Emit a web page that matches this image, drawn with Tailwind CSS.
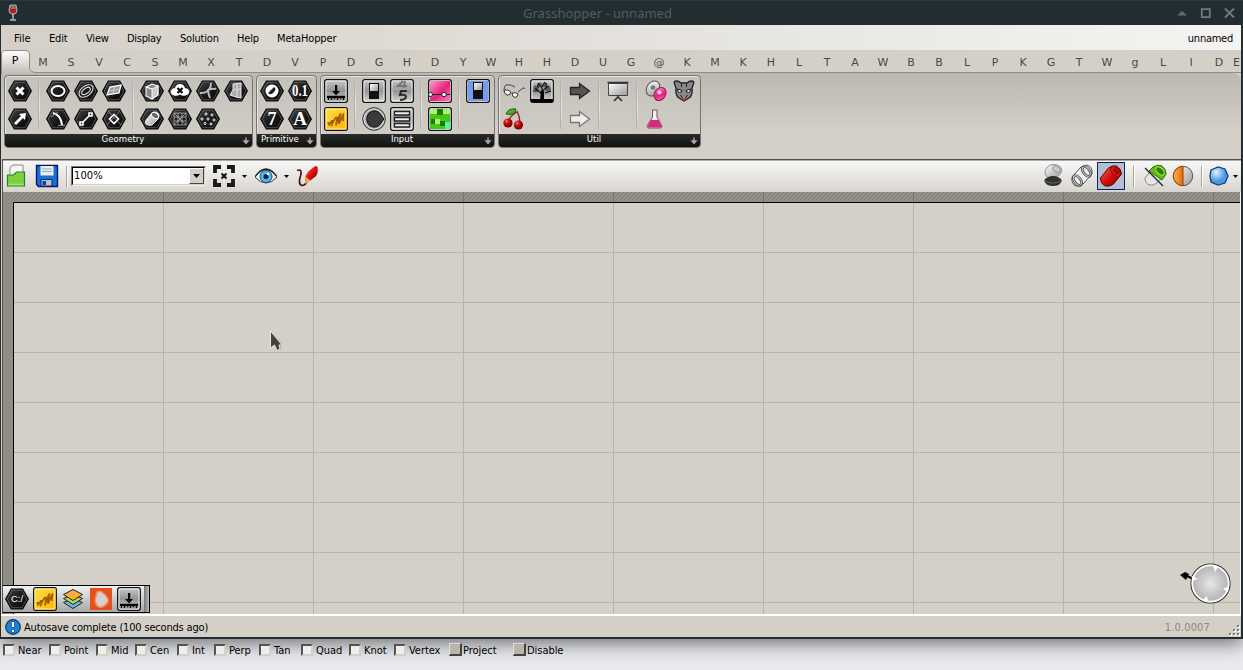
<!DOCTYPE html>
<html lang="en"><head><meta charset="utf-8"><title>Grasshopper - unnamed</title>
<script src="https://cdn.jsdelivr.net/npm/@tailwindcss/browser@4"></script></head>
<body class="w-[1243px] h-[670px] overflow-hidden bg-[#e9eaee] text-black text-[11px] leading-[14px] [font-family:'DejaVu_Sans_Condensed','DejaVu_Sans',sans-serif] [font-stretch:condensed]">
<svg class="absolute w-0 h-0">
<defs>
<linearGradient id="gHex" x1="0" y1="0" x2="1" y2="1"><stop offset="0" stop-color="#4a4a4a"/><stop offset=".45" stop-color="#1d1d1d"/><stop offset="1" stop-color="#050505"/></linearGradient>
<linearGradient id="gGrey" x1="0" y1="0" x2="0" y2="1"><stop offset="0" stop-color="#c8c8c8"/><stop offset=".5" stop-color="#939393"/><stop offset="1" stop-color="#d8d8d8"/></linearGradient>
<linearGradient id="gMetal" x1="0" y1="0" x2="1" y2="1"><stop offset="0" stop-color="#fff"/><stop offset="1" stop-color="#999"/></linearGradient>
<linearGradient id="gRed" x1="0" y1="0" x2="1" y2="1"><stop offset="0" stop-color="#ff6a5a"/><stop offset=".5" stop-color="#d80f0f"/><stop offset="1" stop-color="#600"/></linearGradient>
<linearGradient id="gPink" x1="0" y1="0" x2="1" y2="1"><stop offset="0" stop-color="#ff9bcc"/><stop offset=".55" stop-color="#e8207c"/><stop offset="1" stop-color="#ff7cba"/></linearGradient>
<linearGradient id="gYel" x1="0" y1="0" x2="1" y2="1"><stop offset="0" stop-color="#ffe04a"/><stop offset="1" stop-color="#ffb400"/></linearGradient>
<linearGradient id="gOrange"><stop offset="0" stop-color="#ffb050"/><stop offset="1" stop-color="#df6a05"/></linearGradient>
<radialGradient id="gBall"><stop offset="0" stop-color="#e6e6e6"/><stop offset="1" stop-color="#b0b0b0"/></radialGradient>
<radialGradient id="gCherry" cx=".35" cy=".3"><stop offset="0" stop-color="#ff8a7a"/><stop offset=".4" stop-color="#e01515"/><stop offset="1" stop-color="#8a0000"/></radialGradient>
<radialGradient id="gBlue" cx=".35" cy=".3"><stop offset="0" stop-color="#dff4ff"/><stop offset="1" stop-color="#4a98e0"/></radialGradient>
</defs>
<symbol id="hex" viewBox="0 0 24 24"><path d="M6.3 2h11.4L23.3 12l-5.6 10H6.3L.7 12z" fill="url(#gHex)" stroke="#080808" stroke-width="1.2"/><path d="M6.9 3.3h10.2L21.8 12l-4.7 8.7H6.9L2.2 12z" fill="none" stroke="#777" stroke-width=".6"/></symbol>
<symbol id="sq" viewBox="0 0 24 24"><rect x=".7" y=".7" width="22.6" height="22.6" rx="2" fill="url(#gGrey)" stroke="#111" stroke-width="1.3"/><rect x="2" y="2" width="20" height="20" rx="1" fill="none" stroke="#f5f5f5" stroke-width=".9"/></symbol>
<symbol id="scrib" viewBox="0 0 24 24"><rect x=".7" y=".7" width="22.6" height="22.6" rx="2" fill="url(#gYel)" stroke="#111" stroke-width="1.3"/><rect x="2" y="2" width="20" height="20" fill="none" stroke="#fff3b0" stroke-width=".9"/><path d="M3.500 16.500q2-2 1.500 1.500 3-5 3.500-4t-1 4.500q3-7 4.500-8t0 7.500q2-8 4.500-11-2 6-1.500 9.500Q18 10 19.500 7q-1 6 0 7" fill="none" stroke="#a55a00" stroke-width="1.700" stroke-linejoin="round"/></symbol>
<symbol id="press" viewBox="0 0 24 24"><use href="#sq"/><path d="M2.500 16h19v5.500h-19z" fill="#888"/><path d="M11 6h2.200v6H16l-3.900 4.500L8 12h3zM3 17h18v2h-1v2h-1v-2h-2v1h-1v-1h-2v2h-1v-2h-2v1h-1v-1H8v2H7v-2H5v2H4v-2H3z" fill="#050505"/></symbol>
<symbol id="plus" viewBox="0 0 8 8"><path d="M3.300.5h1.400v2.800h2.800L4 7.500.5 3.300h2.800z" fill="#a8a8a8"/></symbol>
</svg>

<div class="h-[639px] w-[1243px] bg-[#222d32] flex flex-col relative z-10 shadow-[0_4px_18px_rgba(0,0,0,0.55)]">
 <header class="h-[25px] shrink-0 flex items-center relative px-[6px] border-t border-[#2b373c]">
  <svg width="14" height="18" viewBox="0 0 14 18"><path d="M4 1h6l1 5q0 4-3 4H6Q3 10 3 6z" fill="#776" stroke="#a9aaa9"/><path d="M4 5h6v2q0 2-3 2T4 7z" fill="#d30d0d"/><path d="M7 10v5M4 16h6" stroke="#b8bbb9" stroke-width="1.5"/></svg>
  <div class="flex-1 text-center text-[13px] tracking-[0.01px] text-[#525c62] [font-family:'Noto_Sans'] [font-stretch:normal]">Grasshopper - unnamed</div>
  <svg class="w-[65px] h-[14px] -mr-[3px]" viewBox="0 0 65 14"><path d="M2 9.500 7 5l5 4.500z" fill="#626971"/><path d="M26.800 3.200h8v8h-8z" fill="none" stroke="#737980" stroke-width="1.800"/><path d="m50 2.500 9 9m0-9-9 9" stroke="#737980" stroke-width="1.800"/></svg>
 </header>
 <div class="flex-1 min-h-0 ml-px mr-[2px] mb-[2px] bg-[#d4d0c8] flex flex-col">
  <nav class="h-[25px] shrink-0 flex items-center bg-gradient-to-r from-[#d4d0c8] to-[#f5f4f2] pl-[13px] pr-[8px] pt-[2px] whitespace-nowrap">
   <span class="w-[35px]">File</span><span class="w-[37px] tracking-[-0.2px]">Edit</span><span class="w-[41px] tracking-[-0.2px]">View</span><span class="w-[53px] tracking-[-0.3px]">Display</span><span class="w-[57px] tracking-[-0.2px]">Solution</span><span class="w-[40px] tracking-[-0.2px]">Help</span><span class="flex-1 tracking-[-0.15px]">MetaHopper</span><span class="tracking-[-0.25px]">unnamed</span>
  </nav>
  <div class="h-[23px] shrink-0 relative border-b border-[#918e88]">
   <svg class="absolute left-0 top-0 w-[36px] h-[24px]" viewBox="0 0 36 24"><defs><linearGradient id="gTab" x1="0" y1="0" x2="0" y2="1"><stop offset="0" stop-color="#fff"/><stop offset="1" stop-color="#bfbbb5"/></linearGradient></defs><path d="M.5 24V5Q.5.5 5 .5h19q4.500 0 4.500 4.500v12q0 5.500 7 5.500V24z" fill="url(#gTab)"/><path d="M.5 24V5Q.5.5 5 .5h19q4.500 0 4.500 4.500v12q0 5.500 7 5.500" fill="none" stroke="#918e88"/></svg>
   <div id="tabs" class="relative h-[22px] flex items-center text-[#494949] text-[11px] [font-family:'DejaVu_Sans'] [font-stretch:normal]"></div>
  </div>
  <section class="h-[86px] shrink-0 bg-gradient-to-b from-[#bcb8b2] to-[#d4d0c8] to-70% pt-[2px] pl-[3px] flex gap-[3px] items-start rounded-tr-lg" id="ribbon"></section>
  <div class="flex-1 min-h-0 ml-px flex flex-col border-t border-[#55524e] border-l">
   <div class="h-[32px] shrink-0 flex items-center bg-gradient-to-b from-[#f8f7f6] to-[#d8d5cf] border-t border-[#aaa] pb-px">
    <svg class="ml-[3px] w-[22px] h-6 shrink-0" viewBox="0 0 22 24"><path d="M4 9V3.500L7 1h10v11H4z" fill="#f6f6f6" stroke="#888"/><path d="M1.500 22V11h6l3-3h8v14z" fill="#7ed13d" stroke="#17882c" stroke-width="1.200"/><path d="M2.500 20.500h15" stroke="#a4e663" stroke-width="1.500"/></svg>
    <svg class="ml-[7px] w-6 h-6 shrink-0" viewBox="0 0 24 24"><path d="M1.500 1.500h21v21h-19l-2-2z" fill="#186fd6" stroke="#051a68" stroke-width="1.400"/><path d="M5.500 2h13v9.500h-13z" fill="#e9edf0"/><path d="M7 5h10M7 7.500h10" stroke="#9aa4ac"/><path d="M6 15.500h11V22H6z" fill="#b8c1cd" stroke="#092767"/><path d="M7.500 17H11v4H7.500z" fill="#0a3fae"/></svg>
    <i class="ml-[7px] w-[2px] h-[21px] border-l border-[#a5a39e] bg-white shrink-0"></i>
    <div class="ml-[3px] w-[135px] h-[20px] -mt-px border border-[#777] border-r-[#eee] border-b-[#eee] shrink-0"><div class="h-[18px] border border-black border-r-[#d4d0c8] border-b-[#d4d0c8] bg-white flex items-center pl-px"><span class="flex-1 tracking-[0.1px]">100%</span><div class="w-[15px] h-4 bg-[#d4d0c8] border border-white border-r-[#444] border-b-[#444] flex items-center justify-center"><svg width="7" height="4" viewBox="0 0 7 4"><path d="M0 0h7L3.500 4z"/></svg></div></div></div>
    <svg class="ml-[6px] w-6 h-6 shrink-0" viewBox="0 0 24 24"><path d="M3 9V3h6M15 3h6v6M21 15v6h-6M9 21H3v-6" fill="none" stroke="#1a1a18" stroke-width="3.800"/><path d="m9.500 9.500 5 5m0-5-5 5" stroke="#111" stroke-width="2"/></svg>
    <svg class="ml-[6px] w-[5px] h-[3px] shrink-0" viewBox="0 0 5 3"><path d="M0 0h5L2.500 3z"/></svg>
    <svg class="ml-[7px] w-6 h-6 shrink-0" viewBox="0 0 24 24"><path d="M1 13Q6 5.500 12 5.500T23 13q-5 6-11 6T1 13z" fill="#eef5f6" stroke="#333"/><circle cx="12" cy="12.500" r="6" fill="#4eb8ec" stroke="#164f76"/><circle cx="12" cy="12.500" r="2.500" fill="#031929"/><circle cx="14" cy="10" r="1.300" fill="#fff"/><path d="M1.500 12Q7 5 12 5t10.500 7" fill="none" stroke="#222" stroke-width="1.300"/></svg>
    <svg class="ml-[6px] w-[5px] h-[3px] shrink-0" viewBox="0 0 5 3"><path d="M0 0h5L2.500 3z"/></svg>
    <svg class="ml-[6px] w-6 h-6 shrink-0" viewBox="0 0 24 24"><path d="M2 6.500c4-1.500 5 .5 3.500 5.500-1.500 4-2 9 2 9.500 3-.5 4-3 4.500-5" fill="none" stroke="#501010" stroke-width="1.700"/><path d="M10.500 17v-5q3-6 10-10l2 .5q1 7-2 10l-6 4.500z" fill="url(#gRed)"/><path d="m10.500 12.500 5 4-5.500 3.500z" fill="#f1a23f"/></svg>
    <div class="flex-1"></div>
    <svg class="w-6 h-[26px] shrink-0" viewBox="0 0 24 26"><path d="M4 9q1-6 7-7.500 5-1 9 3 2 3-1 7l-4 3H7q-4-2-3-5.500z" fill="url(#gMetal)" stroke="#999"/><ellipse cx="15.500" cy="6" rx="4" ry="2.700" transform="rotate(35 15.500 6)" fill="#ccc" stroke="#999"/><path d="M3 17.500q3-4.500 9-4.500t9 4.500q-2 5.500-9 5.500-7 0-9-5.500z" fill="#30302f"/><path d="M3 17.500q9 5 18 0" stroke="#888" stroke-width=".6" fill="none"/></svg>
    <svg class="ml-[5px] w-6 h-6 shrink-0" viewBox="0 0 24 24" fill="none" stroke="#555"><path d="m2 13 9-10 6-2q6 2 5 9l-9 10q-3 3-7 2Q1 20 2 13z" fill="#eee"/><ellipse cx="7.500" cy="16.500" rx="4" ry="6.500" transform="rotate(-38 7.500 16.500)"/><ellipse cx="7.500" cy="16.500" rx="2.300" ry="4.500" transform="rotate(-38 7.500 16.500)"/><ellipse cx="16.500" cy="7.500" rx="4" ry="6.500" transform="rotate(-38 16.500 7.500)"/><ellipse cx="16.500" cy="7.500" rx="2.300" ry="4.500" transform="rotate(-38 16.500 7.500)"/></svg>
    <div class="ml-[3px] w-[28px] h-[28px] bg-[#b5bdd2] border border-[#0a246a] flex items-center justify-center shrink-0"><svg width="24" height="24" viewBox="0 0 24 24"><path d="m1.500 14 8-10q4-3 8-2 5 3 5 8l-8 10q-4 3-8 2-5-2-5-8z" fill="url(#gRed)" stroke="#600"/><ellipse cx="16.500" cy="7.500" rx="3.600" ry="6" transform="rotate(-45 16.500 7.500)" fill="#e52018" stroke="#8b0704"/><ellipse cx="17" cy="7.500" rx="2" ry="4" transform="rotate(-45 17 7.500)" fill="#970b0b"/></svg></div>
    <i class="ml-[8px] w-[2px] h-[21px] border-l border-[#a5a39e] bg-white shrink-0"></i>
    <svg class="ml-[8px] w-6 h-6 shrink-0" viewBox="0 0 24 24"><path d="m2 14 7-9q4-4 8-3 5 2 5 8l-8 9q-4 3-7 2-5-1-5-7z" fill="#e5e5e5" stroke="#888"/><path d="m6 7 4-4q5-3 9-1 4 3 4 8l-4 6z" fill="#63bc13" stroke="#267103"/><ellipse cx="17" cy="7" rx="3" ry="5" transform="rotate(-45 17 7)" fill="#307e08" stroke="#a4ef47"/><path d="m2 4 18 18" stroke="#222" stroke-width="1.200"/></svg>
    <svg class="ml-[4px] w-6 h-6 shrink-0" viewBox="0 0 24 24"><circle cx="12" cy="12" r="9.700" fill="url(#gMetal)" stroke="#555"/><path d="M12 2.300a9.700 9.700 0 0 0 0 19.400z" fill="url(#gOrange)" stroke="#954109"/></svg>
    <i class="ml-[6px] w-[2px] h-[21px] border-l border-[#a5a39e] bg-white shrink-0"></i>
    <svg class="ml-[4px] w-6 h-6 shrink-0" viewBox="0 0 24 24"><path d="m4 6 7-3 7 2 3 7-3 7-7 2-7-3-1-6z" fill="url(#gBlue)" stroke="#173d7d" stroke-width="1.300"/></svg>
    <svg class="ml-[2px] mr-[3px] w-[5px] h-[3px] shrink-0" viewBox="0 0 5 3"><path d="M0 0h5L2.500 3z"/></svg>
   </div>
   <main class="flex-1 min-h-0 relative overflow-hidden">
    <svg class="block w-[1238px] h-[422px]" viewBox="3 192 1238 422"><defs><pattern id="hatch" width="4" height="4" patternUnits="userSpaceOnUse"><path d="M0 0h4v4H0z" fill="#96948d"/><path d="m-1 5 6-6M-1 1l2-2M3 5l2-2" stroke="#84827b" stroke-width="1.200"/></pattern><pattern id="grid" x="13" y="202" width="150" height="50" patternUnits="userSpaceOnUse"><path d="M.5 0v50M0 .5h150" stroke="#b8b4ad"/></pattern></defs><path d="M3 192h1238v422H3z" fill="#d4d0c8"/><path d="M13 202h1228v412H13z" fill="url(#grid)"/><path d="M3 192h1238v10H13v412H3z" fill="url(#hatch)"/><path d="M163.500 192v10m150-10v10m150-10v10m150-10v10m150-10v10m150-10v10m150-10v10m150-10v10" stroke="#76746e"/><path d="M1241 202.500H13.500V614" fill="none" stroke="#000"/><path d="M1240.500 192v422" stroke="#f4f3f0"/>
     <path d="m271 332 0 14.500 3.500-1 2 5 4.500-.5 1-7z" fill="#aaa79f" opacity=".7"/><path d="M270.500 331v17l4-3 2.500 5.500 3-1.500-1-4h3z" fill="#45433f" stroke="#e8e6e2"/>
     <circle cx="1210.500" cy="583.500" r="19.500" fill="url(#gBall)" stroke="#333" stroke-width="1.200"/><circle cx="1210.500" cy="583.500" r="18.200" fill="none" stroke="#fff" stroke-width="1.700"/><path d="m1192 576 6 3-6 2zM1213 565l5 2-3 5zM1229 586l-6 3 5 3zM1203 600l4-4 1 6z" fill="#fff"/><path d="m1180 575 5-3 4 2-3 6z"/><path d="m1187 576 4 2" stroke="#000" stroke-width="2"/></svg>
    <div class="absolute left-0 bottom-px w-[147px] h-[28px] border border-l-0 border-black bg-gradient-to-b from-[#f2f2f2] to-[#a7a7a7] flex gap-1 items-center pl-[2px]">
     <svg width="24" height="24" viewBox="0 0 24 24"><use href="#hex"/><text x="12" y="15" font-size="9.500" font-family="Liberation Sans" fill="#fff" text-anchor="middle">C:/</text></svg>
     <svg width="24" height="24"><use href="#scrib"/></svg>
     <svg width="24" height="24" viewBox="0 0 24 24" stroke="#222" stroke-linejoin="round"><path d="m2.500 15.500 9.500-4 9.500 4-9.500 6z" fill="#69b9e7"/><path d="m2.500 11.500 9.500-4 9.500 4-9.500 6z" fill="#b5d944"/><path d="m2.500 7.500 9.500-5 9.500 5-9.500 6z" fill="#fbad42"/></svg>
     <svg width="24" height="24" viewBox="0 0 24 24"><path d="M1 1h22v22H1z" fill="#e3521e"/><path d="M8 5q4-2 6 1c4 3 6 7 5 9q-4 6-9 5-4-2-4-7z" fill="#d5d0ca" stroke="#f08b61" stroke-width="1.500"/></svg>
     <svg width="24" height="24"><use href="#press"/></svg>
     <i class="-ml-px h-full flex-1 bg-gradient-to-r from-[#777] to-[#bbb]"></i>
    </div>
   </main>
  </div>
  <footer class="h-[23px] shrink-0 border-t-2 border-white flex items-center pl-[4px] pt-[2px] relative">
   <svg class="w-4 h-4 shrink-0 -mt-px" viewBox="0 0 16 16"><circle cx="8" cy="8" r="7.300" fill="#1687d7" stroke="#0a347a" stroke-width="1.200"/><path d="M6.500 2.500h3v6h-3zM6.500 10.500h3v3h-3z" fill="#fff" stroke="#073a95" stroke-width=".7"/></svg>
   <span class="ml-[3px] flex-1 tracking-[-0.18px]">Autosave complete (100 seconds ago)</span><span class="text-[#8b8983] mr-[31px] tracking-[0.15px]">1.0.0007</span>
   <svg class="absolute right-0 bottom-0 w-3 h-3" viewBox="0 0 12 12"><path d="M9 1h2v2H9zM5 5h2v2H5zM9 5h2v2H9zM1 9h2v2H1zM5 9h2v2H5zM9 9h2v2H9z" fill="#fff"/><path d="M8 0h2v2H8zM4 4h2v2H4zM8 4h2v2H8zM0 8h2v2H0zM4 8h2v2H4zM8 8h2v2H8z" fill="#807d76"/></svg>
  </footer>
 </div>
</div>
<div id="snaps" class="h-[31px] relative z-20 flex pl-[3px] pt-[4px] whitespace-nowrap"></div>

<script>
const el=(parent,cls,html='')=>{const d=document.createElement('div');d.className=cls;d.innerHTML=html;parent.append(d);return d};
const tabs=document.getElementById('tabs');
[...'PMSVCSMXTDVPDGHDYWHHDUG@KMKHLTAWBBLPKGTWgLIDE'].forEach((c,i)=>el(tabs,i===0?'w-[28px] shrink-0 text-center -mt-px text-black':i===44?'w-[8px] shrink-0 pt-[3px]':'w-[28px] shrink-0 text-center pt-[3px]',c));
const hex=s=>'<use href="#hex"/><g fill="none" stroke="#fff" stroke-width="1.6">'+s+'</g>', sq=s=>'<use href="#sq"/>'+s;
const letter=(t,size,len)=>`<text x="12" y="${12+size*.34}" font-family="Liberation Serif" font-weight="bold" font-size="${size}" fill="#fff" stroke="none" text-anchor="middle"${len?` textLength="${len}" lengthAdjust="spacingAndGlyphs"`:''}>${t}</text>`;
const groups=[
['Geometry','w-[249px]','-ml-[11px]',[
 [[hex('<path stroke-width="3" d="m8.500 8.500 7 7m0-7-7 7"/>'),hex('<path fill="#fff" stroke="none" d="m6 16 7-7-2-2 7-1-1 7-2-2-7 7z"/>')]],
 [[hex('<ellipse cx="12" cy="12" rx="6.500" ry="5" stroke-width="2"/>'),hex('<path d="M7 6q8 2 9 12" stroke-width="2.200"/><path d="m5 10 7-5M12 18.500h7" stroke="#aaa" stroke-width=".8"/>')],
  [hex('<g transform="rotate(-38 12 12)" stroke="#ddd" stroke-width="1.100"><ellipse cx="12" cy="12" rx="8" ry="5"/><ellipse cx="12" cy="12" rx="5" ry="2.600"/></g>'),hex('<path d="m8 16 8-8M6 15h3v3H6zM15 6h3v3h-3z"/>')],
  [hex('<path d="m5 16 3-8 11-2-2 8z" fill="#999" stroke-width="1.300"/><path d="m7 12 11-2m-5-3-2 8" stroke="#ddd" stroke-width=".8"/>'),hex('<path d="m12 7.500 4.500 4.500-4.500 4.500L7.500 12z"/><path d="M6 4l13 14M18 4 5 18" stroke="#aaa" stroke-width=".7"/>')]],
 [[hex('<path d="m6 8 6-3 6 2v9l-6 4-6-3z" fill="#888" stroke-width="1.100"/><path d="m6 8 6 2v10l6-4V7l-6 3z" fill="#ccc" stroke-width=".9"/>'),hex('<path d="m6 13 6-7q5-3 7 2 0 3-2 5l-5 5q-4 1-6-1-1-2 0-4z" fill="url(#gMetal)" stroke="#eee" stroke-width="1"/><ellipse cx="15" cy="8.500" rx="4" ry="2.500" transform="rotate(35 15 8.500)" fill="#666" stroke-width="1"/>')],
  [hex('<path fill="#fff" stroke="none" d="M6 16.500q-5-2-2.500-5.500 1-2 3.500-2 1-4 5-4t5 4q3 0 4 2.500 1 4-3.500 5-3 1-5.500-1-3 2-6 1z"/><path stroke="#111" stroke-width="2.300" d="m9.500 9 5 5m0-5-5 5"/>'),hex('<path d="M6 6h12v12H6zM6 10h12M6 14h12M10 6v12M14 6v12M6 6l12 12M18 6 6 18" stroke="#c4c4c4" stroke-width=".7"/>')],
  [hex('<path d="M4 14q7 0 8-3 3-2 3-7M12 11q4-2 8-1M12 11q0 3 2 8" stroke="#bbb" stroke-width="2"/>'),hex('<g stroke-width=".9"><circle cx="10" cy="7" r="1.100"/><circle cx="16" cy="8" r="1.100"/><circle cx="6" cy="12" r="1.100"/><circle cx="12" cy="12" r="1.100"/><circle cx="18" cy="13" r="1.100"/><circle cx="9" cy="16.500" r="1.100"/><circle cx="15" cy="17" r="1.100"/></g>')],
  [hex('<path d="m9 5 8-1v15l-5-1-6-2 3-5z" fill="#aaa" stroke="#eee" stroke-width="1"/><path d="m9 11 8-1M13 5v13" stroke="#eee" stroke-width=".8"/>'),'']]]],
['Primitive','w-[61px]','-ml-[13px]',[[[hex('<circle cx="12" cy="12" r="6.500" fill="#fff" stroke="none"/><path fill="#222" stroke="none" d="m8 14 6-6q3 2 0 5-3 4-6 1z"/>'),hex(letter('7',18))],[hex(letter('0.1',16,16)),hex(letter('A',19))]]]],
['Input','w-[175px]','-ml-[11px]',[
 [['<use href="#press"/>','<use href="#scrib"/>']],
 [[sq('<path fill="#111" d="M7 4h10v16H7z"/><path fill="url(#gMetal)" d="M8 5h8v7H8z"/>'),'<circle cx="12" cy="12" r="11.300" fill="#aaa" stroke="#333"/><circle cx="12" cy="12" r="10" fill="none" stroke="#ddd"/><path d="M22 12 17 5.500q-5-3.500-10 .5-4.500 6 0 12 5 4 10 .5z" fill="#3a3a3a" stroke="#111"/>'],
  [sq('<path d="M13 2 8 7h9M15 2l-1 7" fill="none" stroke="#777" stroke-width="2"/><path d="M17 12h-6l-1 4q6-1 6 2-1 3-6 3" fill="none" stroke="#2c2c2c" stroke-width="2.200"/><path d="M2 9.500h20V11H2z" fill="#aaa"/>'),sq('<path d="M4.500 4.500h15V8h-15zm0 6h15V14h-15zm0 6h15V20h-15z" fill="#eee" stroke="#222" stroke-width="1.300"/>')]],
 [[sq('<path d="M2 2h20v20H2z" fill="url(#gPink)"/><path d="M2 15.500h20" stroke="#222"/><circle cx="2.500" cy="15.500" r="2" fill="#fff" stroke="#222"/><circle cx="16" cy="15.500" r="2.200" fill="#fff" stroke="#222"/>'),sq('<path d="M2 2h20v20H2z" fill="#43c719"/><path d="M2 2h7v5H2zm13 0h7v5h-7zM7 12h5v5H7z" fill="#b4f06a"/><path d="M9 2h6v6H9zM3 12h4v5H3zm9 2h5v5h-5z" fill="#167f0b"/><path d="M17 15h5v7h-5z" fill="#58f49c"/>')]],
 [[sq('<path d="M2 2h20v20H2z" fill="#729bf2"/><path fill="#111" d="M7 3h10v17H7z"/><path fill="url(#gMetal)" d="M8 4h8v7H8z"/>'),'']]]],
['Util','w-[203px]','-ml-[11px]',[
 [['<path d="M2 11q0-4 2-5 5-1 9 2m3 5 5-4q1-1 2 1" fill="none" stroke="#444"/><path d="M2 11q4-1 7 2-1 4-4 3-3-1-3-5zM10 14q4-1 6 1 0 3-3 3.500-3-.5-3-4.500z" fill="#f4f4f2" stroke="#333"/>','<path d="M6 14Q9 8 15 5M18 16q0-6-3-12" fill="none" stroke="#7a2a1c" stroke-width="1.300"/><path d="M4 7q2-6 10-5-1 7-10 5z" fill="#58a82b" stroke="#286111"/><circle cx="6" cy="16" r="4.600" fill="url(#gCherry)"/><circle cx="16.500" cy="18" r="4.600" fill="url(#gCherry)"/>'],
  [sq('<path d="M1 20h22v3H1z"/><path d="M12 21V9M12 15 5 9m7 3 7-5M12 9 8 4m4 4 3-5M9 12H3m12 2 6-2M8 9V5m8 5V4" stroke="#111" fill="none" stroke-width="1.200"/><path d="M11 12h3v9h-4z"/><g fill="#222" opacity=".5"><circle cx="6" cy="9" r="2.700"/><circle cx="10" cy="6" r="2.500"/><circle cx="15" cy="6" r="2.500"/><circle cx="18" cy="10" r="2.700"/></g>'),'']],
 [['<path d="M2.500 8.500h9v-4l10 7.500-10 7.500v-4h-9z" fill="#555" stroke="#222" stroke-width="1.300"/>','<path d="M2.500 8.500h9v-4l10 7.500-10 7.500v-4h-9z" fill="#eee" stroke="#777" stroke-width="1.300"/>']],
 [['<path d="M2.500 4.500h19v12h-19z" fill="url(#gMetal)" stroke="#444"/><path d="M1.500 3.500h21M12 16v2m-4 4 4-4 4 4" fill="none" stroke="#333" stroke-width="1.700"/>','']],
 [['<ellipse cx="9" cy="9.500" rx="6.200" ry="8" transform="rotate(35 9 9.500)" fill="url(#gMetal)" stroke="#555"/><circle cx="9" cy="8.500" r="2.300" fill="#777"/><ellipse cx="16" cy="15" rx="5.500" ry="7" transform="rotate(35 16 15)" fill="url(#gPink)" stroke="#91195b"/><circle cx="15.500" cy="13.500" r="2" fill="#ffd0e5"/>','<path d="M8.500 3h4.500v7l5 9q0 2-2 2H5q-2 0-2-2l5.500-9z" fill="#eee" stroke="#8e4368"/><path d="M7 13h7.500l3 6q0 1.500-1.500 1.500H5q-2-.5-.5-3z" fill="#d42c7c"/>'],
  ['<path d="M3 6Q1 2 4 2q3 0 5 2h6q2-2 5-2 3 0 1 4l-1 3q1 7-3 10l-5 3-5-3Q3 16 4 9z" fill="#888" stroke="#222" stroke-width="1.400"/><path d="m5.500 10 4.500 1.500q0 2-2.500 2-2 0-2-3.500zm13 0L14 11.500q0 2 2.500 2 2 0 2-3.500z" fill="#eee" stroke="#111" stroke-width="1"/><path d="M9.500 5v3m5-3v3M8.500 16l2 3m5-3-2 3" fill="none" stroke="#222"/><path d="m10 19.500 2 3 2-3z" fill="#df2929"/>','']]]]];
const ribbon=document.getElementById('ribbon');
groups.forEach(([name,w,off,parts])=>{
 const box=el(ribbon,w+' h-[73px] rounded-[4px] border border-[#77746f] bg-gradient-to-b from-[#c4c1bc] to-[#d3cfc7] shadow-[inset_0_1px_0_#e6e3df,inset_1px_0_0_#e6e3df] flex flex-col overflow-hidden');
 const body=el(box,'flex-1 flex items-start pt-px pl-px');
 parts.forEach((cols,i)=>{
  if(i)el(body,'w-[10px] h-[54px] flex justify-center','<i class="mt-1 w-[2px] h-[48px] bg-gradient-to-b from-transparent via-[#ece9e4] to-transparent border-l border-[#b5b1aa]"></i>');
  cols.forEach(col=>{const c=el(body,'w-[28px] flex flex-col');col.forEach(ic=>el(c,'h-[28px] flex items-center justify-center','<svg class="w-6 h-6" viewBox="0 0 24 24">'+ic+'</svg>'))});
 });
 el(box,'h-[13px] shrink-0 bg-gradient-to-b from-[#2b2c2a] to-[#101210] text-white text-[9.5px] leading-[10px] flex items-center justify-center relative','<span class="'+off+' -mt-[4px] tracking-[0.02px]">'+name+'</span><svg class="absolute right-[2px] bottom-[2px] w-2 h-2"><use href="#plus"/></svg>');
});
const snaps=document.getElementById('snaps');
[['Near','w-[46px]'],['Point','w-[47px]'],['Mid','w-[39px]'],['Cen','w-[42px]'],['Int','w-[37px]'],['Perp','w-[45px]'],['Tan','w-[42px]'],['Quad','w-[48px]'],['Knot','w-[45px]'],['Vertex','w-[55px]'],['Project','w-[64px]'],['Disable','w-[60px]']].forEach(([t,w],i)=>
 el(snaps,w+' shrink-0 flex items-start',(i<10?'<i class="mr-[3px] mt-px w-3 h-3 border-2 border-t-[#55534f] border-l-[#55534f] border-r-[#d4d0c8] border-b-[#d4d0c8] bg-[#eeeeef]"></i>':'<i class="mr-px w-[13px] h-[13px] bg-[#b8b5ae] border border-t-[#ddd] border-l-[#ddd] border-r-2 border-b-2 border-r-[#44423f] border-b-[#44423f]"></i>')+'<span class="mt-px tracking-[-0.05px]">'+t+'</span>'));
</script>
</body></html>
